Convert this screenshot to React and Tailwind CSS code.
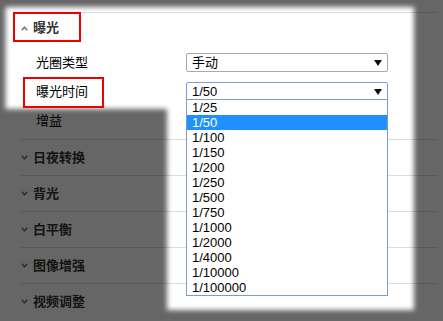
import React from "react";

const font = { fontFamily: '"Liberation Sans", Arial, "Noto Sans CJK SC", sans-serif' };

const options = ["1/25", "1/50", "1/100", "1/150", "1/200", "1/250", "1/500", "1/750", "1/1000", "1/2000", "1/4000", "1/10000", "1/100000"];

const collapsed = ["日夜转换", "背光", "白平衡", "图像增强", "视频调整"];

function Chevron({ up }) {
  return (
    <svg width="7" height="5" viewBox="0 0 7 5" className="shrink-0">
      <path d={up ? "M0.8 4.2 L3.5 1.2 L6.2 4.2" : "M0.8 0.8 L3.5 3.8 L6.2 0.8"} fill="none" stroke="#777" strokeWidth="1.6" />
    </svg>
  );
}

function Arrow() {
  return (
    <svg width="8" height="6" viewBox="0 0 8 6">
      <path d="M0 0 H8 L4 6 Z" fill="#111" />
    </svg>
  );
}

function FakeSelect({ value, focused }) {
  return (
    <div
      className={`w-[202px] h-[19px] flex items-center justify-between pl-[5px] pr-[5px] rounded-[2px] bg-white border text-[13px] text-black ${
        focused ? "border-[#7b9fd9]" : "border-[#a9a9a9]"
      }`}
    >
      <span>{value}</span>
      <Arrow />
    </div>
  );
}

export default function App() {
  return (
    <div className="relative w-[443px] h-[321px] overflow-hidden bg-white" style={font}>
      <div className="pt-[12px] pl-[21px] pr-[7px]">
        <div className="border-t border-[#dcdcdc]">
          <div className="h-[30px] flex items-center gap-[5px]">
            <Chevron up />
            <span className="text-[13px] font-bold text-[#333]">曝光</span>
          </div>
          <div className="pt-[5px] pb-[4px] pl-[15px] text-[13px] text-black">
            <div className="h-[29px] flex items-center">
              <span className="w-[150px]">光圈类型</span>
              <FakeSelect value="手动" />
            </div>
            <div className="h-[29px] flex items-center">
              <span className="w-[150px]">曝光时间</span>
              <FakeSelect value="1/50" focused />
            </div>
            <div className="h-[29px] flex items-center">
              <span className="w-[150px]">增益</span>
            </div>
          </div>
        </div>
        {collapsed.map((t) => (
          <div key={t} className="h-[36px] border-t border-[#dcdcdc] flex items-center gap-[5px]">
            <Chevron />
            <span className="text-[13px] font-bold text-[#333]">{t}</span>
          </div>
        ))}
      </div>

      <div className="absolute left-[186px] top-[99px] w-[202px] bg-white border border-[#7f9db9] text-[13px] text-black">
        {options.map((o) => (
          <div key={o} className={`h-[15px] leading-[15px] pl-[5px] ${o === "1/50" ? "bg-[#1e90ff] text-white" : ""}`}>
            {o}
          </div>
        ))}
      </div>

      <svg className="absolute inset-0 pointer-events-none" width="443" height="321">
        <defs>
          <filter id="soft" x="-10%" y="-10%" width="120%" height="120%">
            <feGaussianBlur stdDeviation="2.5" />
          </filter>
          <mask id="hole">
            <rect width="443" height="321" fill="white" />
            <g filter="url(#soft)">
              <rect x="5.5" y="7" width="408.5" height="102" fill="black" />
              <rect x="167" y="7" width="247" height="303" fill="black" />
            </g>
          </mask>
        </defs>
        <rect width="443" height="321" fill="rgba(0,0,0,0.6)" mask="url(#hole)" />
      </svg>

      <div className="absolute left-[13px] top-[12px] w-[68px] h-[30px] border-2 border-[#ee0000]" />
      <div className="absolute left-[23px] top-[77px] w-[81px] h-[31px] border-2 border-[#ee0000]" />
    </div>
  );
}
